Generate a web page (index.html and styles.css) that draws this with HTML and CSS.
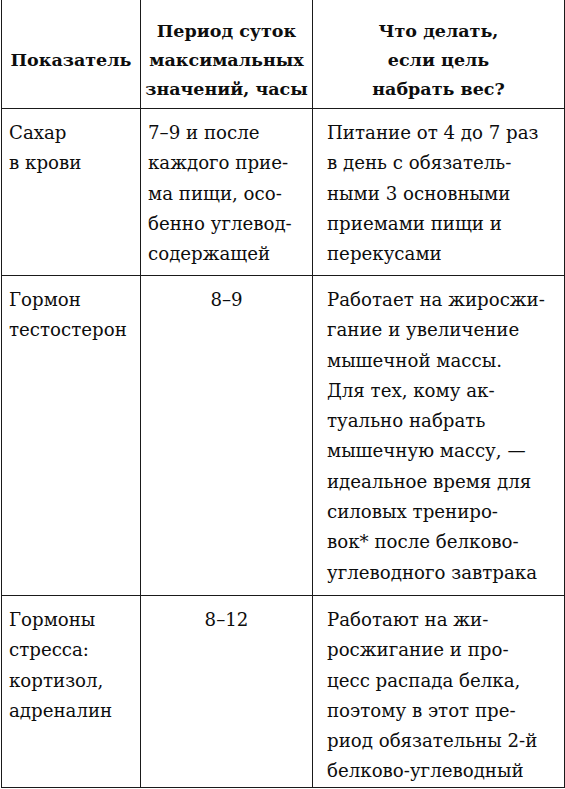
FILE: index.html
```html
<!DOCTYPE html>
<html lang="ru">
<head>
<meta charset="utf-8">
<title>Таблица</title>
<link rel="stylesheet" href="styles.css">
</head>
<body>
<div class="sheet">
<table class="grid">
  <colgroup>
    <col class="c1">
    <col class="c2">
    <col class="c3">
  </colgroup>
  <thead>
    <tr class="head">
      <th class="h1">Показатель</th>
      <th>Период суток<br>максимальных<br>значений, часы</th>
      <th>Что делать,<br>если цель<br>набрать вес?</th>
    </tr>
  </thead>
  <tbody>
    <tr class="r1">
      <td class="name">Сахар<br>в крови</td>
      <td class="period">7–9 и после<br>каждого прие-<br>ма пищи, осо-<br>бенно углевод-<br>содержащей</td>
      <td class="todo">Питание от 4 до 7 раз<br>в день с обязатель-<br>ными 3 основными<br>приемами пищи и<br>перекусами</td>
    </tr>
    <tr class="r2">
      <td class="name">Гормон<br>тестостерон</td>
      <td class="period center">8–9</td>
      <td class="todo">Работает на жиросжи-<br>гание и увеличение<br>мышечной массы.<br>Для тех, кому ак-<br>туально набрать<br>мышечную массу, —<br>идеальное время для<br>силовых трениро-<br>вок* после белково-<br>углеводного завтрака</td>
    </tr>
    <tr class="r3">
      <td class="name">Гормоны<br>стресса:<br>кортизол,<br>адреналин</td>
      <td class="period center">8–12</td>
      <td class="todo">Работают на жи-<br>росжигание и про-<br>цесс распада белка,<br>поэтому в этот пре-<br>риод обязательны 2-й<br>белково-углеводный</td>
    </tr>
  </tbody>
</table>
</div>
</body>
</html>
```
FILE: styles.css
```css
html, body {
  margin: 0;
  padding: 0;
  background: #ffffff;
}

.sheet {
  padding-left: 1px;
}

.grid {
  width: 563px;
  table-layout: fixed;
  border-collapse: collapse;
  font-family: "DejaVu Serif", "Liberation Serif", serif;
  color: #0d0d0d;
}

.c1 { width: 139px; }
.c2 { width: 172px; }
.c3 { width: 252px; }

.grid th,
.grid td {
  border: 1px solid #1a1a1a;
  white-space: nowrap;
  overflow: hidden;
}

.grid thead th {
  border-top: none;
}

.head {
  height: 108px;
}

.grid th {
  font-size: 17.5px;
  font-weight: bold;
  line-height: 29px;
  text-align: center;
  vertical-align: bottom;
  padding: 15px 0 4px;
}

.grid th.h1 {
  vertical-align: middle;
  padding: 14px 0 0;
}

.grid td {
  font-size: 18.2px;
  line-height: 30.3px;
  vertical-align: top;
  padding: 9.5px 0 0;
}

.name { padding-left: 7px !important; }
.period { padding-left: 7px !important; }
.period.center { padding-left: 0 !important; text-align: center; }
.todo { padding-left: 14px !important; }

.r1 { height: 167px; }
.r2 { height: 320px; }
.r3 { height: 192px; }
```
